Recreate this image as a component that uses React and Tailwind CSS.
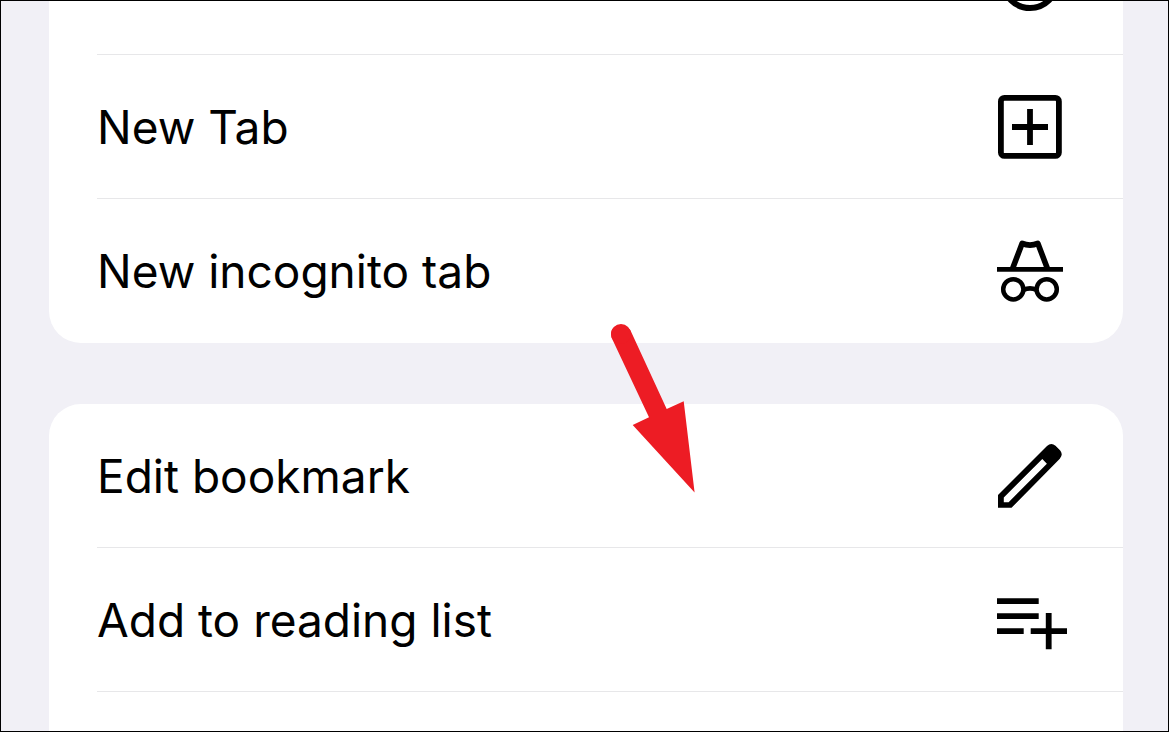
const ICONS = {
  reload: <circle cx="40" cy="38" r="27" fill="none" stroke="currentColor" strokeWidth="6" />,
  newTab: (
    <g fill="none" stroke="currentColor" strokeWidth="5.8">
      <rect x="10.9" y="10.9" width="58" height="58" rx="3.5" />
      <path d="M22 40h36M40 22v36" />
    </g>
  ),
  incognito: (
    <g fill="none" stroke="currentColor" strokeWidth="4.7">
      <path d="M7 38.3h66" />
      <path
        d="M22.4 38 32.2 12.3Q36 13.9 40 14.1 44 13.9 47.8 12.3L57.6 38"
        strokeWidth="5.6"
        strokeLinejoin="round"
      />
      <circle cx="23.3" cy="58.3" r="10.1" strokeWidth="4.5" />
      <circle cx="56.7" cy="58.3" r="10.1" strokeWidth="4.5" />
      <path d="M33.5 59Q40 55.6 46.5 59" />
    </g>
  ),
  edit: (
    <path
      fill="currentColor"
      fillRule="evenodd"
      d="M8 59 57 10Q61.3 6.2 65.5 9.8L70 14.3Q73.6 18.4 69.8 22.8L21.5 71.8H8ZM13.8 61.4V66.2h4.8L56.9 27.7 52.3 22.9Z"
    />
  ),
  readingList: (
    <path
      fill="none"
      stroke="currentColor"
      strokeWidth="5.8"
      d="M7 21.2h41.7M7 36.2h41.7M7 51.2h26.7M40.7 51.2H77M58.7 33v36.3"
    />
  ),
}

export default function App() {
  return (
    <main className="relative h-screen overflow-hidden border border-black bg-[#f1f0f6] pl-12 pr-[45px] font-['Inter',sans-serif] text-black">
      {/* First group is scrolled up, so only the end of its top row shows. */}
      <MenuGroup className="-mt-[90px]">
        <MenuRow icon="reload" ariaLabel="Reload" divider />
        <MenuRow icon="newTab" label="New Tab" divider />
        <MenuRow icon="incognito" label="New incognito tab" />
      </MenuGroup>

      <MenuGroup className="mt-[61px]">
        <MenuRow icon="edit" label="Edit bookmark" divider />
        <MenuRow icon="readingList" label="Add to reading list" divider />
        <li className="h-36" />
      </MenuGroup>

      <PointerArrow />
    </main>
  )
}

function MenuGroup({ className, children }) {
  return (
    <ul className={`overflow-hidden rounded-[32px] bg-white pl-12 ${className}`}>{children}</ul>
  )
}

function MenuRow({ icon, label, ariaLabel, divider }) {
  return (
    <li className={divider ? 'h-36 border-b border-[#e7e7e9]' : 'h-36'}>
      <button
        type="button"
        aria-label={ariaLabel}
        className="flex w-full items-start justify-between pt-8 pr-[53px] text-left text-[46px] leading-[80px]"
      >
        <span>{label}</span>
        <svg viewBox="0 0 80 80" className="size-20 shrink-0" aria-hidden="true">
          {ICONS[icon]}
        </svg>
      </button>
    </li>
  )
}

function PointerArrow() {
  return (
    <svg
      viewBox="0 0 86 174"
      className="pointer-events-none absolute left-[609px] top-[319px] h-[174px] w-[86px] text-[#ed1c24]"
      aria-hidden="true"
    >
      <path
        fill="currentColor"
        d="M20.3 10C13 2 1 4.5 1 14Q1 16.5 2.3 19.3L39 97.3 22.7 105 84.6 172.4 73.7 81.3 56.7 89Z"
      />
      <circle cx="11" cy="14" r="10" fill="currentColor" />
    </svg>
  )
}
